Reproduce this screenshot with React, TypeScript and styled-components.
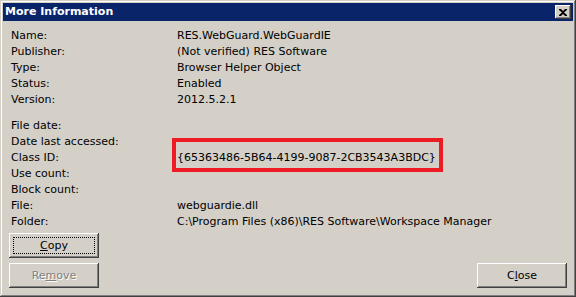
import React from 'react';
import styled, { createGlobalStyle, css } from 'styled-components';

const GlobalStyle = createGlobalStyle`
  html, body {
    margin: 0;
    padding: 0;
    background: #d4d0c8;
  }
  body {
    font-family: Tahoma, "DejaVu Sans", "Liberation Sans", sans-serif;
    font-size: 11px;
  }
`;

type Row = { label: string; value?: string; boxed?: boolean; spaced?: boolean };

const rows: Row[] = [
  { label: 'Name:', value: 'RES.WebGuard.WebGuardIE' },
  { label: 'Publisher:', value: '(Not verified) RES Software' },
  { label: 'Type:', value: 'Browser Helper Object' },
  { label: 'Status:', value: 'Enabled' },
  { label: 'Version:', value: '2012.5.2.1' },
  { label: 'File date:', spaced: true },
  { label: 'Date last accessed:' },
  { label: 'Class ID:', value: '{65363486-5B64-4199-9087-2CB3543A3BDC}', boxed: true },
  { label: 'Use count:' },
  { label: 'Block count:' },
  { label: 'File:', value: 'webguardie.dll' },
  { label: 'Folder:', value: 'C:\\Program Files (x86)\\RES Software\\Workspace Manager' },
];

export default function App() {
  return (
    <>
      <GlobalStyle />
      <Window>
        <TitleBar>
          <Title>More Information</Title>
          <CloseBox aria-label="Close">
            <svg width="8" height="7" viewBox="0 0 8 7">
              <path d="M0 0h2l2 2 2-2h2v1L5 3.5 8 6v1H6L4 5 2 7H0V6l3-2.5L0 1z" fill="#000" />
            </svg>
          </CloseBox>
        </TitleBar>
        <Body>
          <InfoGrid>
            {rows.map(row => (
              <InfoRow key={row.label} $spaced={row.spaced}>
                <Label>{row.label}</Label>
                <Value>
                  {row.boxed ? <Marked>{row.value}</Marked> : row.value}
                </Value>
              </InfoRow>
            ))}
          </InfoGrid>
          <Footer>
            <ButtonStack>
              <Button>
                <Focus>
                  <u>C</u>opy
                </Focus>
              </Button>
              <Button disabled>
                Re<u>m</u>ove
              </Button>
            </ButtonStack>
            <Button>
              C<u>l</u>ose
            </Button>
          </Footer>
        </Body>
      </Window>
    </>
  );
}

const Window = styled.div`
  width: 576px;
  height: 297px;
  box-sizing: border-box;
  padding: 3px;
  display: flex;
  flex-direction: column;
  background: #d4d0c8;
  box-shadow:
    inset -1px -1px #404040,
    inset 1px 1px #d4d0c8,
    inset -2px -2px #808080,
    inset 2px 2px #ffffff;
`;

const TitleBar = styled.div`
  height: 18px;
  background: #0a246a;
  display: flex;
  align-items: center;
  justify-content: space-between;
  padding: 0 2px 0 2px;
`;

const Title = styled.span`
  color: #ffffff;
  font-weight: bold;
  font-size: 11px;
  line-height: 18px;
  white-space: nowrap;
`;

const CloseBox = styled.div`
  width: 16px;
  height: 14px;
  box-sizing: border-box;
  background: #d4d0c8;
  display: flex;
  align-items: center;
  justify-content: center;
  box-shadow:
    inset -1px -1px #404040,
    inset 1px 1px #ffffff,
    inset -2px -2px #808080;
`;

const Body = styled.div`
  flex: 1;
  display: flex;
  flex-direction: column;
  justify-content: space-between;
  padding: 7px 6px 6px 6px;
`;

const InfoGrid = styled.div`
  display: flex;
  flex-direction: column;
  padding-left: 2px;
`;

const InfoRow = styled.div<{ $spaced?: boolean }>`
  display: grid;
  grid-template-columns: 166px 1fr;
  height: 16px;
  line-height: 16px;
  color: #000;
  ${p =>
    p.$spaced &&
    css`
      margin-top: 10px;
    `}
`;

const Label = styled.span`
  white-space: nowrap;
`;

const Value = styled.span`
  position: relative;
  white-space: nowrap;
`;

const Marked = styled.span`
  position: relative;
  display: inline-block;
  height: 16px;
  &::after {
    content: '';
    position: absolute;
    left: -5px;
    right: -7px;
    top: -12px;
    bottom: -6px;
    border: 4px solid #ed1c24;
  }
`;

const Footer = styled.div`
  display: flex;
  justify-content: space-between;
  align-items: flex-end;
`;

const ButtonStack = styled.div`
  display: flex;
  flex-direction: column;
  gap: 5px;
`;

const Button = styled.button`
  width: 90px;
  height: 25px;
  padding: 0;
  border: none;
  background: #d4d0c8;
  font-family: inherit;
  font-size: 11px;
  color: #000;
  display: flex;
  align-items: center;
  justify-content: center;
  box-shadow:
    inset -1px -1px #404040,
    inset 1px 1px #ffffff,
    inset -2px -2px #808080;
  &:disabled {
    color: #808080;
    text-shadow: 1px 1px #ffffff;
  }
  u {
    text-underline-offset: 1px;
  }
`;

const Focus = styled.span`
  box-sizing: border-box;
  width: 82px;
  height: 17px;
  display: flex;
  align-items: center;
  justify-content: center;
  border: 1px dotted #000;
`;
